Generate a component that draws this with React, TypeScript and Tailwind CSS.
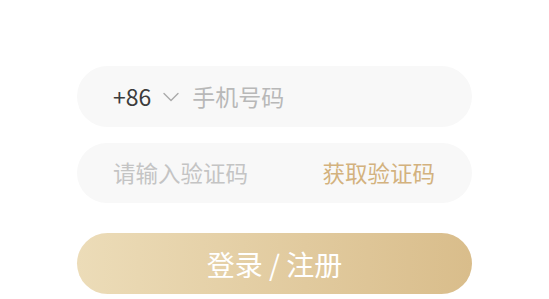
import React from 'react'

export default function App() {
  return (
    <div
      className="w-full h-[299px] bg-white pt-[66px]"
      style={{ fontFamily: '"Noto Sans CJK SC", "Noto Sans", sans-serif' }}
    >
      <div className="w-[395px] mx-auto flex flex-col">
        {/* 手机号 */}
        <div className="h-[61px] rounded-full bg-[#f8f8f8] flex items-center pl-[36px] pr-[36px]">
          <span className="text-[23px] text-[#3c3c3c] leading-none">+86</span>
          <svg className="ml-[12px] w-[16px] h-[10px]" viewBox="0 0 16 10" fill="none">
            <path d="M1 1.5 L8 8.5 L15 1.5" stroke="#aaa" strokeWidth="1.4" strokeLinecap="round" strokeLinejoin="round" />
          </svg>
          <input
            className="ml-[13px] flex-1 min-w-0 bg-transparent outline-none text-[23px] text-[#333] placeholder:text-[#b8b8b8]"
            placeholder="手机号码"
          />
        </div>

        {/* 验证码 */}
        <div className="mt-[16px] h-[60px] rounded-full bg-[#f8f8f8] flex items-center pl-[36px] pr-[37px]">
          <input
            className="flex-1 min-w-0 bg-transparent outline-none text-[22.5px] text-[#333] placeholder:text-[#c4c4c4]"
            placeholder="请输入验证码"
          />
          <span className="text-[22.5px] text-[#d3b27e] whitespace-nowrap">获取验证码</span>
        </div>

        {/* 登录按钮 */}
        <button className="mt-[30px] h-[61px] rounded-full bg-gradient-to-r from-[#ecdcb8] to-[#d9bd8b] text-white text-[28px] flex items-center justify-center">
          登录 / 注册
        </button>
      </div>
    </div>
  )
}
